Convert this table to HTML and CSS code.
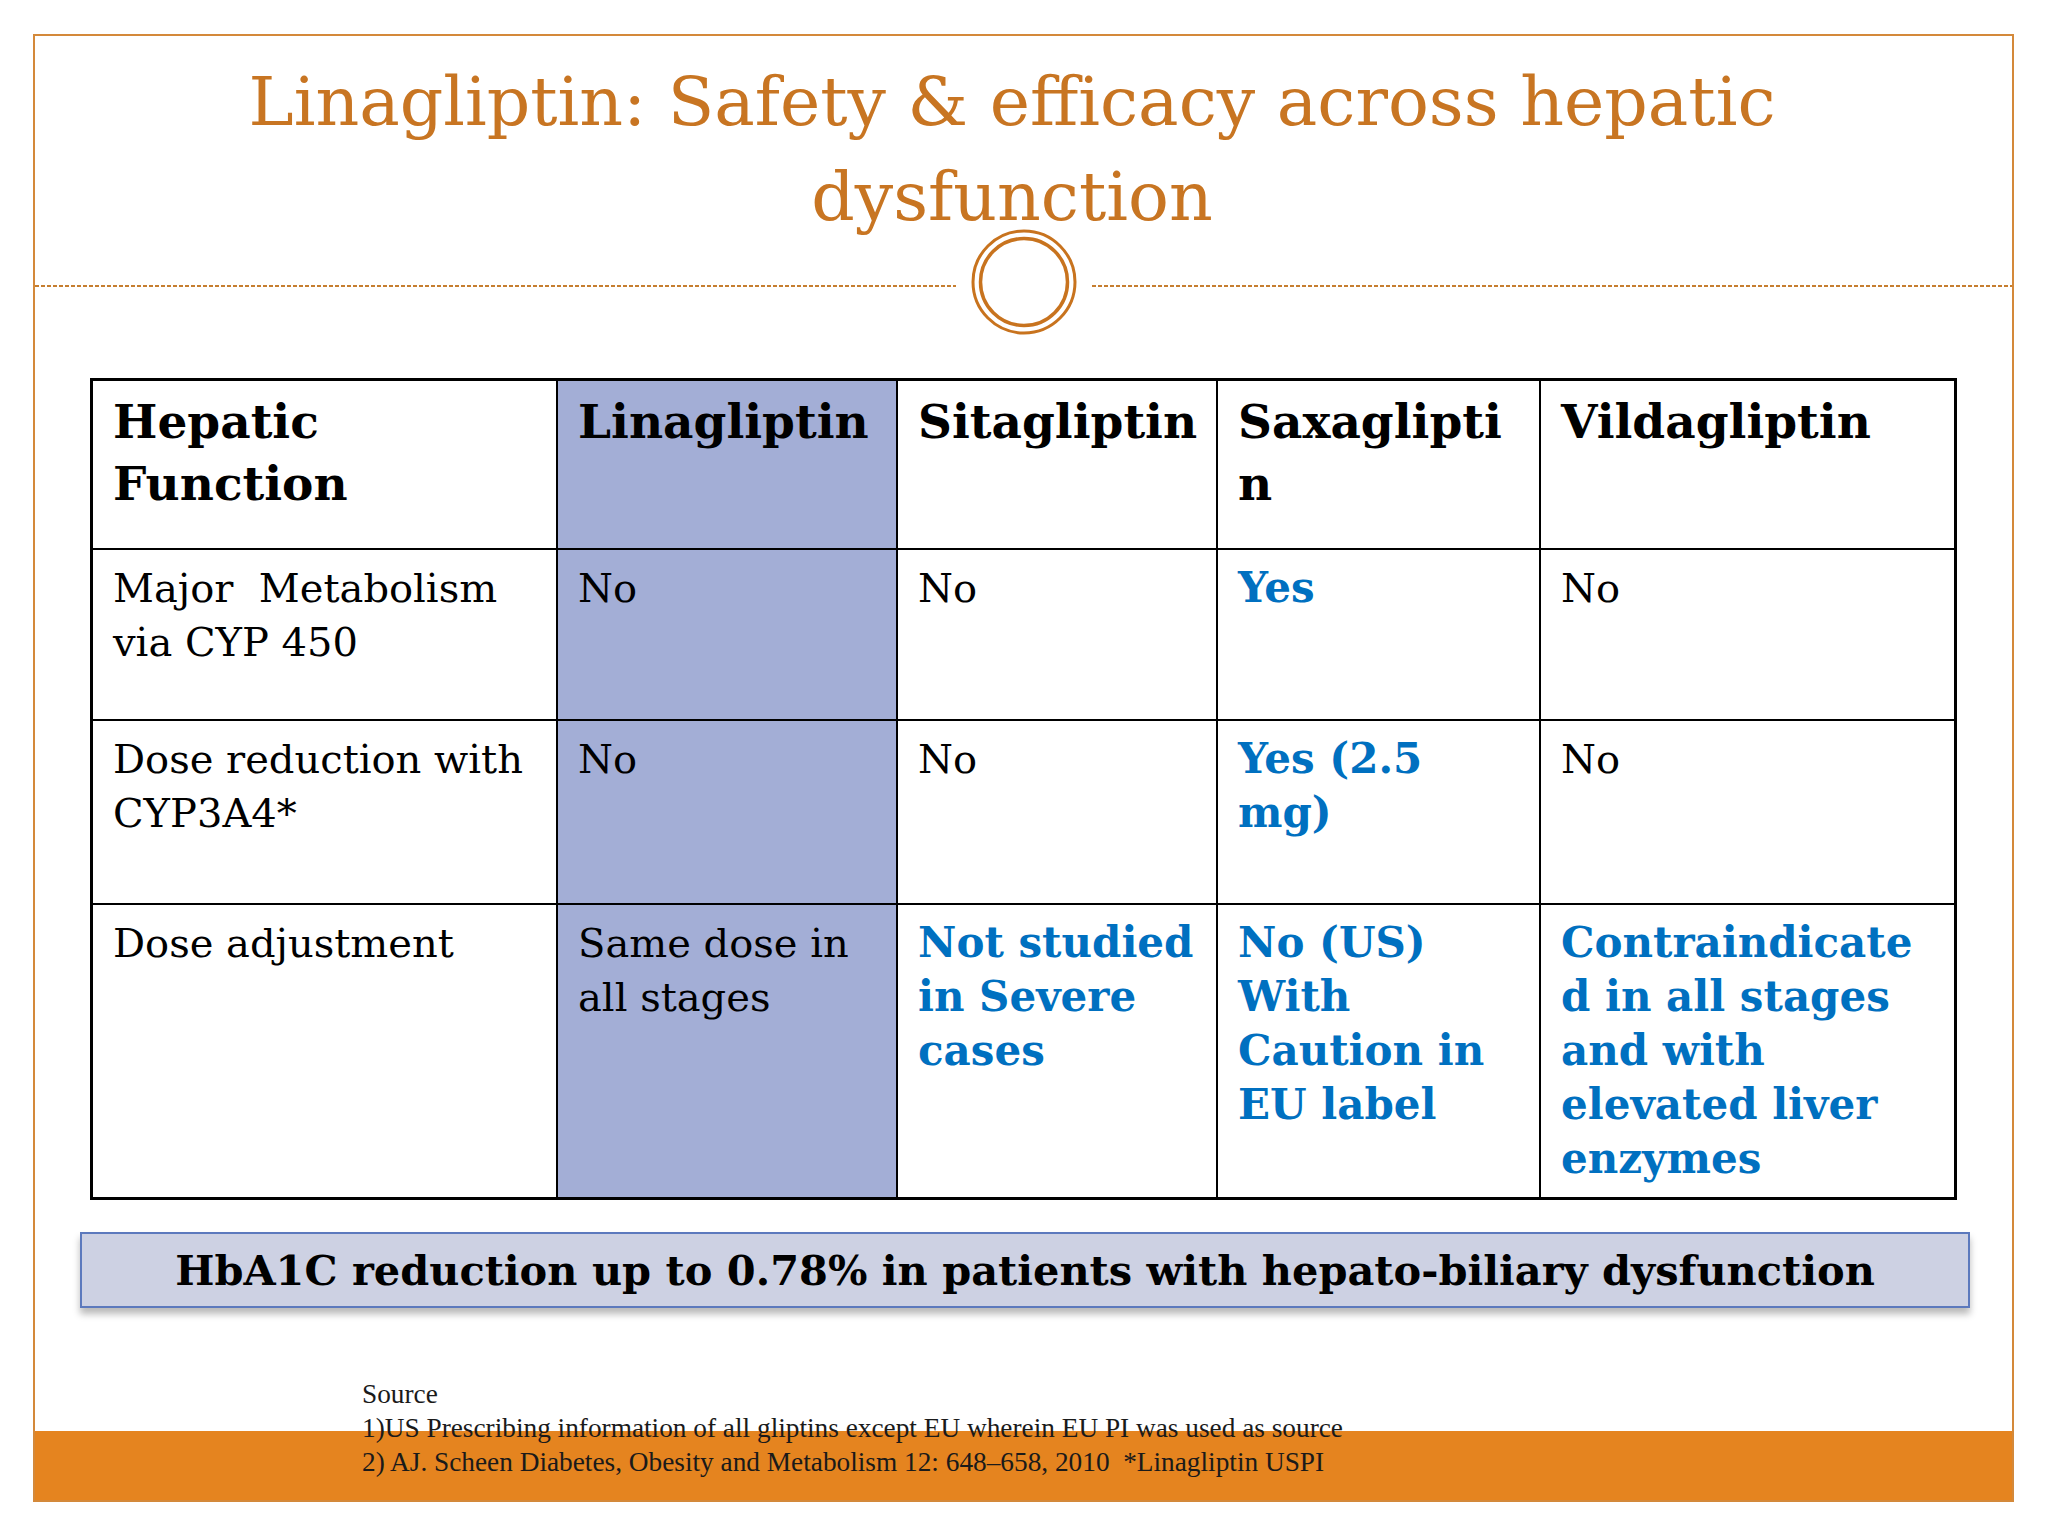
FILE: index.html
```html
<!DOCTYPE html>
<html>
<head>
<meta charset="utf-8">
<link rel="stylesheet" href="styles.css">
</head>
<body>
<div class="slide">
  <h1 class="title">Linagliptin: Safety &amp; efficacy across hepatic<br>dysfunction</h1>
  <div class="divider">
    <span class="dash dash-left"></span>
    <svg class="ring" width="106" height="106" viewBox="0 0 106 106">
      <circle cx="53" cy="53" r="51" fill="none" stroke="#C8731E" stroke-width="3"/>
      <circle cx="53" cy="53" r="43.5" fill="none" stroke="#C8731E" stroke-width="3.5"/>
    </svg>
    <span class="dash dash-right"></span>
  </div>
  <table class="cmp">
    <colgroup>
      <col class="c1"><col class="c2"><col class="c3"><col class="c4"><col class="c5">
    </colgroup>
    <tr class="r1">
      <th>Hepatic<br>Function</th>
      <th class="lina">Linagliptin</th>
      <th>Sitagliptin</th>
      <th>Saxaglipti<br>n</th>
      <th class="last">Vildagliptin</th>
    </tr>
    <tr class="r2">
      <td>Major&nbsp; Metabolism<br>via CYP 450</td>
      <td class="lina">No</td>
      <td>No</td>
      <td class="hl">Yes</td>
      <td class="last">No</td>
    </tr>
    <tr class="r3">
      <td>Dose reduction with<br>CYP3A4*</td>
      <td class="lina">No</td>
      <td>No</td>
      <td class="hl">Yes (2.5<br>mg)</td>
      <td class="last">No</td>
    </tr>
    <tr class="r4">
      <td class="bottom">Dose adjustment</td>
      <td class="lina bottom">Same dose in<br>all stages</td>
      <td class="hl bottom">Not studied<br>in Severe<br>cases</td>
      <td class="hl bottom">No (US)<br>With<br>Caution in<br>EU label</td>
      <td class="hl bottom last">Contraindicate<br>d in all stages<br>and with<br>elevated liver<br>enzymes</td>
    </tr>
  </table>
  <div class="summary">HbA1C reduction up to 0.78% in patients with hepato-biliary dysfunction</div>
  <div class="source">Source<br>1)US Prescribing information of all gliptins except EU wherein EU PI was used as source<br>2) AJ. Scheen Diabetes, Obesity and Metabolism 12: 648–658, 2010&nbsp; *Linagliptin USPI</div>
</div>
</body>
</html>
```

FILE: styles.css
```css
html, body {
  margin: 0;
  padding: 0;
  background: #ffffff;
}
body {
  width: 2048px;
  height: 1536px;
  overflow: hidden;
  font-family: "DejaVu Serif", "Liberation Serif", serif;
}
.slide {
  box-sizing: border-box;
  margin: 34px 0 0 33px;
  width: 1981px;
  height: 1468px;
  border: 2px solid #D4893A;
  background: linear-gradient(to bottom, #ffffff 0, #ffffff 1395px, #E5841F 1395px, #E5841F 100%);
  display: flex;
  flex-direction: column;
}
.title {
  box-sizing: border-box;
  margin: 0;
  height: 193px;
  padding: 18px 23px 0 0;
  font-family: "DejaVu Serif", serif;
  font-weight: normal;
  font-size: 68px;
  line-height: 95px;
  color: #C87522;
  text-align: center;
  white-space: nowrap;
}
.divider {
  height: 106px;
  display: flex;
  align-items: center;
  gap: 15px;
}
.dash {
  height: 2px;
  margin-top: 7px;
  background: repeating-linear-gradient(to right, #C67E30 0, #C67E30 4px, transparent 4px, transparent 6px);
}
.dash-left { width: 921px; }
.dash-right { flex: 1; }
.ring { display: block; flex: none; }

.cmp {
  margin: 43px 0 0 55px;
  border-collapse: separate;
  border-spacing: 0;
  table-layout: fixed;
  width: 1867px;
  border: 3px solid #000;
}
.c1 { width: 465px; }
.c2 { width: 340px; }
.c3 { width: 320px; }
.c4 { width: 323px; }
.c5 { width: 413px; }
.cmp th, .cmp td {
  box-sizing: border-box;
  vertical-align: top;
  text-align: left;
  padding: 11px 10px 0 20px;
  border-right: 2px solid #000;
  border-bottom: 2px solid #000;
  white-space: nowrap;
  color: #000;
}
.cmp th {
  font-weight: bold;
  font-size: 47px;
  line-height: 62px;
  padding-top: 10px;
}
.cmp td {
  font-weight: normal;
  font-size: 40px;
  line-height: 54px;
}
.cmp .last { border-right: none; }
.cmp .bottom { border-bottom: none; }
.r1 { height: 169px; }
.r2 { height: 171px; }
.r3 { height: 184px; }
.r4 { height: 292px; }
.cmp .lina { background: #A3AED6; }
.cmp .hl {
  color: #0070C0;
  font-weight: bold;
  font-size: 42px;
}
.summary {
  box-sizing: border-box;
  margin: 32px 0 0 45px;
  width: 1890px;
  height: 76px;
  border: 2px solid #5C79BD;
  background: #CDD1E3;
  box-shadow: 0 6px 7px rgba(0, 0, 0, 0.28);
  display: flex;
  align-items: center;
  justify-content: center;
  font-weight: bold;
  font-size: 41.5px;
  color: #000;
  white-space: nowrap;
}
.source {
  margin: 69px 0 0 327px;
  font-family: "Liberation Serif", serif;
  font-size: 27.3px;
  line-height: 34px;
  color: #1a1a1a;
  white-space: nowrap;
}
```
